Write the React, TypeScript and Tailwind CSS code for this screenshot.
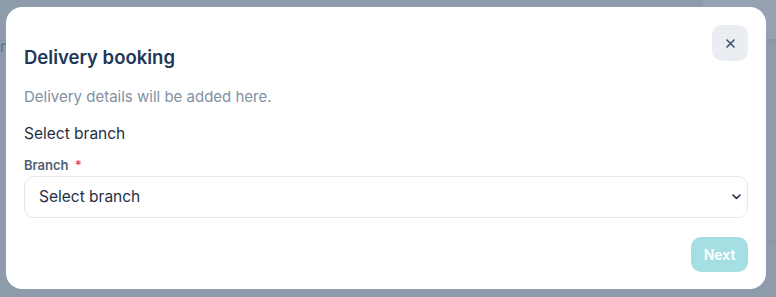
import React from "react";

export default function App() {
  return (
    <div
      className="relative w-full h-[297px] overflow-hidden bg-[#8e9bab]"
      style={{ fontFamily: "Inter, 'Noto Sans', sans-serif" }}
    >
      {/* backdrop page hints */}
      <div className="absolute right-0 top-0 h-[40px] w-[73px] bg-[#96a2b1] border-b border-[#8796a8]">
        <span className="absolute left-[44px] top-[4px] text-[16px] text-[#5f6f84]">ea</span>
      </div>
      <div className="absolute left-0 top-[40px] h-px w-full bg-[#8796a8]" />
      <span className="absolute left-0 top-[34px] text-[16px] text-[#5f6f84]">n</span>
      <div className="absolute left-0 top-[240px] h-px w-full bg-[#8796a8]" />
      {[5, 116, 227, 338, 449, 560, 671].map((x) => (
        <div key={x} className="absolute bottom-0 h-[3px] w-px bg-[#7f8da0]" style={{ left: x }} />
      ))}

      {/* modal */}
      <div className="absolute left-[6px] top-[7px] w-[760px] rounded-[16px] bg-white px-[18px] pt-[18px] pb-[17px] flex flex-col">
        <button className="absolute right-[18px] top-[18px] flex h-[36px] w-[36px] items-center justify-center rounded-[10px] bg-[#eaeef2]">
          <svg width="9" height="9" viewBox="0 0 9 9" fill="none">
            <path d="M1 1L8 8M8 1L1 8" stroke="#3d526d" strokeWidth="1.6" strokeLinecap="round" />
          </svg>
        </button>
        <h2 className="mt-[20px] text-[18.5px] leading-[24px] font-semibold text-[#1e3658]">Delivery booking</h2>
        <p className="mt-[17px] text-[15px] leading-[22px] text-[#8290a3]">Delivery details will be added here.</p>
        <p className="mt-[15px] text-[15.5px] leading-[22px] text-[#1f2f45]">Select branch</p>
        <label className="mt-[11px] text-[13px] leading-[18px] font-semibold text-[#4f5f75]">
          Branch <span className="ml-[3px] text-[#e04b4b]">*</span>
        </label>
        <div className="mt-[2px] flex h-[42px] shrink-0 items-center justify-between rounded-[10px] border border-[#e3e9f0] pl-[14px] pr-[6px]">
          <span className="text-[15.5px] text-[#1f2f45]">Select branch</span>
          <svg width="9" height="6" viewBox="0 0 9 6" fill="none">
            <path d="M1 1L4.5 4.5L8 1" stroke="#1f2f45" strokeWidth="1.6" strokeLinecap="round" strokeLinejoin="round" />
          </svg>
        </div>
        <div className="mt-[19px] flex justify-end">
          <button className="h-[35px] w-[57px] rounded-[10px] bg-[#a6dfe3] text-[14px] font-semibold text-white">Next</button>
        </div>
      </div>
    </div>
  );
}
